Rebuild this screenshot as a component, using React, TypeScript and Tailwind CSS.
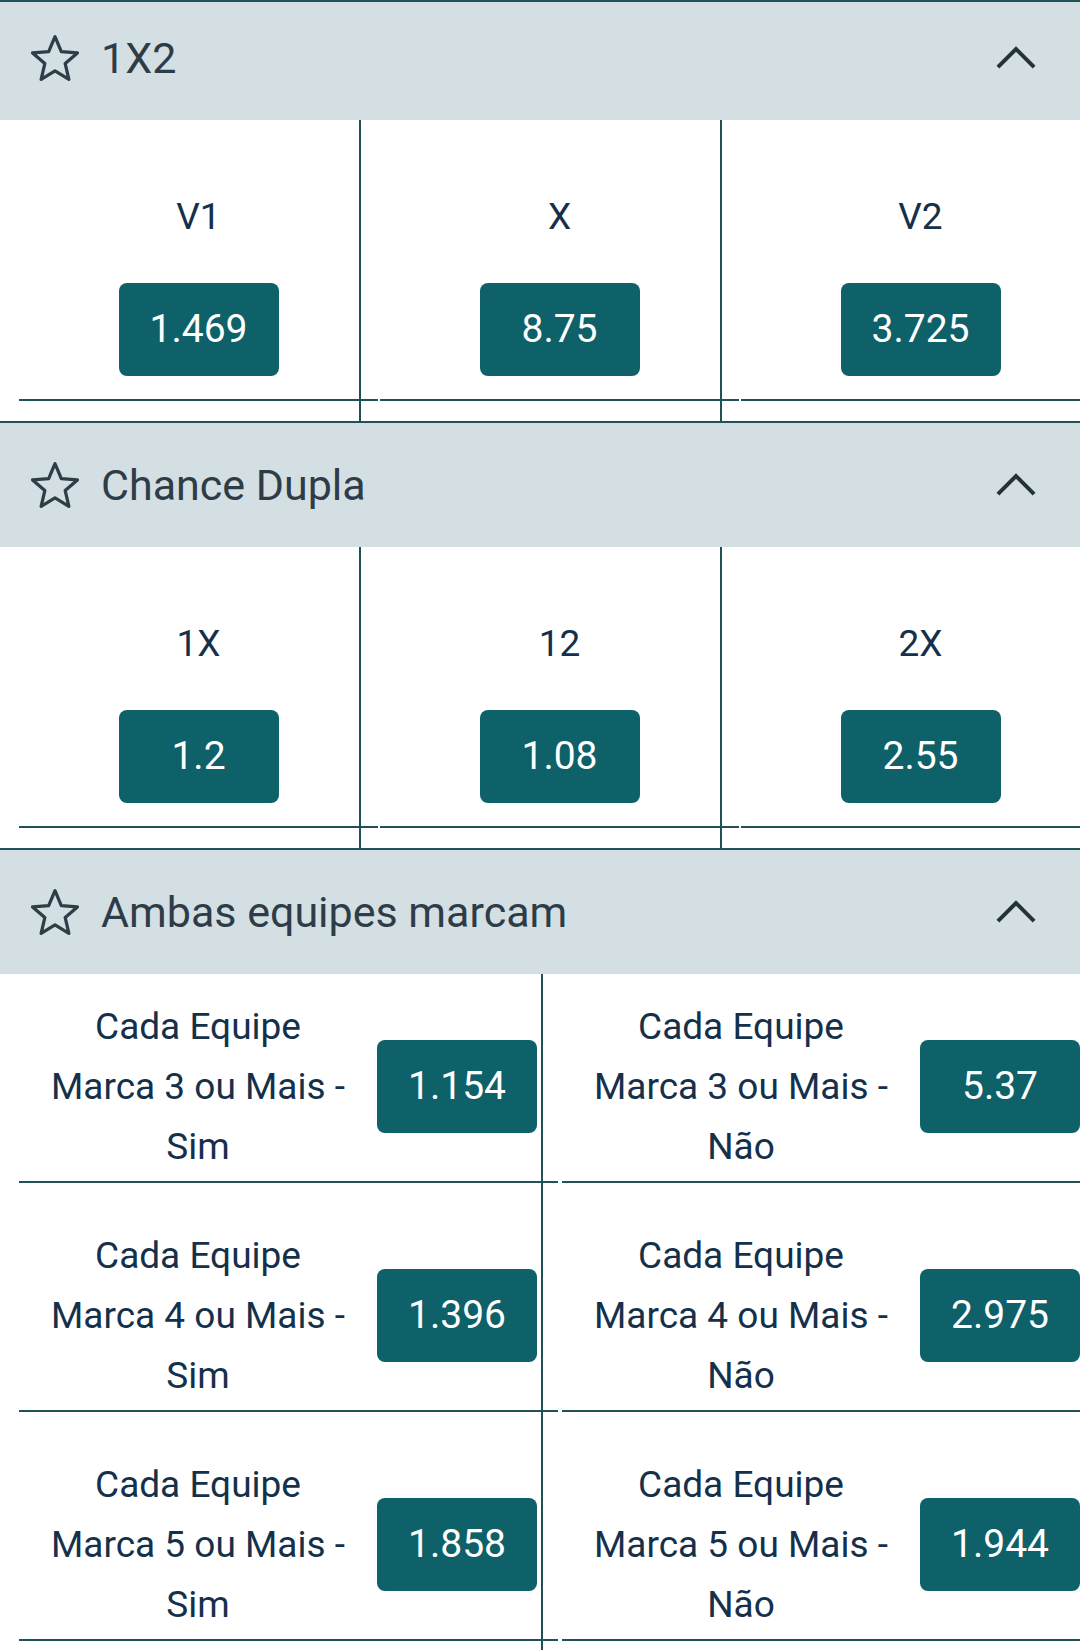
import React from 'react';

type Odd = { label: string; value: string };

const StarIcon = () => (
  <svg width="48" height="46" viewBox="1.3 1.3 21.4 20.4" fill="none" className="shrink-0">
    <path
      d="M22 9.24l-7.19-.62L12 2 9.19 8.63 2 9.24l5.46 4.73L5.82 21 12 17.27 18.18 21l-1.63-7.03L22 9.24z"
      stroke="#2f3d47"
      strokeWidth="1.45"
      strokeLinejoin="round"
    />
  </svg>
);

const ChevronUp = () => (
  <svg width="40" height="24" viewBox="0 0 40 24" fill="none" className="shrink-0">
    <polyline points="1.9,21.1 20,3 38.1,21.1" stroke="#26323a" strokeWidth="4" strokeLinecap="butt" />
  </svg>
);

const Header = ({ title, first }: { title: string; first?: boolean }) => (
  <div
    className={`flex items-center border-t-2 border-[#1f5157] bg-[#d4dfe3] ${
      first ? 'h-[120px] pb-[6px]' : 'h-[126px]'
    }`}
  >
    <div className="ml-[31px]">
      <StarIcon />
    </div>
    <span className="ml-[22px] text-[43px] leading-none text-[#2e3c47]">{title}</span>
    <div className="ml-auto mr-[44px]">
      <ChevronUp />
    </div>
  </div>
);

const OddButton = ({ value }: { value: string }) => (
  <div className="flex h-[93px] w-[160px] shrink-0 items-center justify-center rounded-[8px] bg-[#0e6169] text-[39px] text-white">
    {value}
  </div>
);

const ThreeWay = ({ items }: { items: Odd[] }) => (
  <div className="flex h-[301px] overflow-hidden">
    {items.map((it) => (
      <div key={it.label} className="h-full w-[361px] shrink-0 border-r-2 border-[#1f5157]">
        <div className="ml-[19px] flex h-[281px] w-[359px] flex-col items-center border-b-2 border-[#1f5157] pt-[73px]">
          <div className="text-[37px] leading-[48px] text-[#15304b]">{it.label}</div>
          <div className="mt-[42px]">
            <OddButton value={it.value} />
          </div>
        </div>
      </div>
    ))}
  </div>
);

const TwoCol = ({ cols }: { cols: Odd[][] }) => (
  <div className="flex h-[680px] overflow-hidden">
    {cols.map((col, ci) => (
      <div key={ci} className="h-full w-[543px] shrink-0 border-r-2 border-[#1f5157]">
        {col.map((it) => (
          <div
            key={it.label}
            className="mb-[20px] ml-[19px] flex h-[209px] w-[539px] items-center border-b-2 border-[#1f5157] pt-[18px]"
          >
            <div className="w-[358px] whitespace-pre-line text-center text-[37px] leading-[60px] text-[#15304b]">
              {it.label}
            </div>
            <OddButton value={it.value} />
          </div>
        ))}
      </div>
    ))}
  </div>
);

export default function App() {
  const sim = (n: number) => `Cada Equipe\nMarca ${n} ou Mais -\nSim`;
  const nao = (n: number) => `Cada Equipe\nMarca ${n} ou Mais -\nNão`;

  return (
    <div className="h-[1650px] w-[1080px] overflow-hidden bg-white font-['Roboto','Noto_Sans',sans-serif]">
      <Header title="1X2" first />
      <ThreeWay
        items={[
          { label: 'V1', value: '1.469' },
          { label: 'X', value: '8.75' },
          { label: 'V2', value: '3.725' },
        ]}
      />
      <Header title="Chance Dupla" />
      <ThreeWay
        items={[
          { label: '1X', value: '1.2' },
          { label: '12', value: '1.08' },
          { label: '2X', value: '2.55' },
        ]}
      />
      <Header title="Ambas equipes marcam" />
      <TwoCol
        cols={[
          [
            { label: sim(3), value: '1.154' },
            { label: sim(4), value: '1.396' },
            { label: sim(5), value: '1.858' },
          ],
          [
            { label: nao(3), value: '5.37' },
            { label: nao(4), value: '2.975' },
            { label: nao(5), value: '1.944' },
          ],
        ]}
      />
    </div>
  );
}
